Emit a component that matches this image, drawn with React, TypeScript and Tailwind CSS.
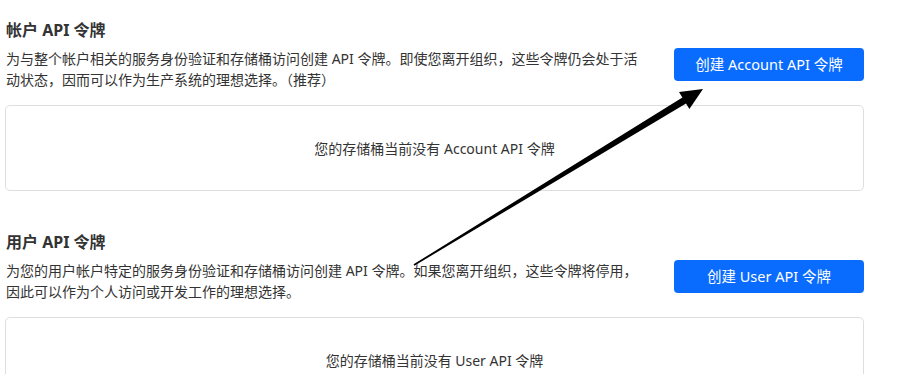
import React from "react";

interface TokenSection {
  title: string;
  description: string;
  button: string;
  empty: string;
}

const sections: TokenSection[] = [
  {
    title: "帐户 API 令牌",
    description:
      "为与整个帐户相关的服务身份验证和存储桶访问创建 API 令牌。即使您离开组织，这些令牌仍会处于活动状态，因而可以作为生产系统的理想选择。（推荐）",
    button: "创建 Account API 令牌",
    empty: "您的存储桶当前没有 Account API 令牌",
  },
  {
    title: "用户 API 令牌",
    description:
      "为您的用户帐户特定的服务身份验证和存储桶访问创建 API 令牌。如果您离开组织，这些令牌将停用，因此可以作为个人访问或开发工作的理想选择。",
    button: "创建 User API 令牌",
    empty: "您的存储桶当前没有 User API 令牌",
  },
];

// 标注箭头：从正文指向按钮
function Arrow() {
  return (
    <svg
      className="pointer-events-none absolute left-0 top-0"
      width="900"
      height="374"
      viewBox="0 0 900 374"
    >
      <polygon
        points="413.6,264.3 682.4,97.5 679,92 703,89 689.4,109.1 686,103.5 414.4,265.7"
        fill="#000"
      />
    </svg>
  );
}

export default function App() {
  return (
    <div
      className="relative h-[374px] w-[900px] overflow-hidden bg-white text-[#333]"
      style={{ fontFamily: '"Noto Sans", "Noto Sans CJK SC", sans-serif' }}
    >
      <div className="flex w-[864px] flex-col pl-[5px] pt-[18px]">
        {sections.map((s, i) => (
          <section key={i} className={i > 0 ? "mt-[39px]" : ""}>
            <h2 className="pl-px text-[16px] font-bold leading-[24px]">{s.title}</h2>
            <div className="mt-[6px] flex items-start justify-between">
              <p className="w-[636px] pl-px text-[14px] leading-[21px]">{s.description}</p>
              <button className="h-[33px] w-[190px] rounded-[4px] bg-[#0a6cff] text-[14.5px] text-white">
                {s.button}
              </button>
            </div>
            <div className="mt-[15px] flex h-[86px] items-center justify-center rounded-[5px] border border-[#dedede] text-[14px]">
              {s.empty}
            </div>
          </section>
        ))}
      </div>
      <Arrow />
    </div>
  );
}
